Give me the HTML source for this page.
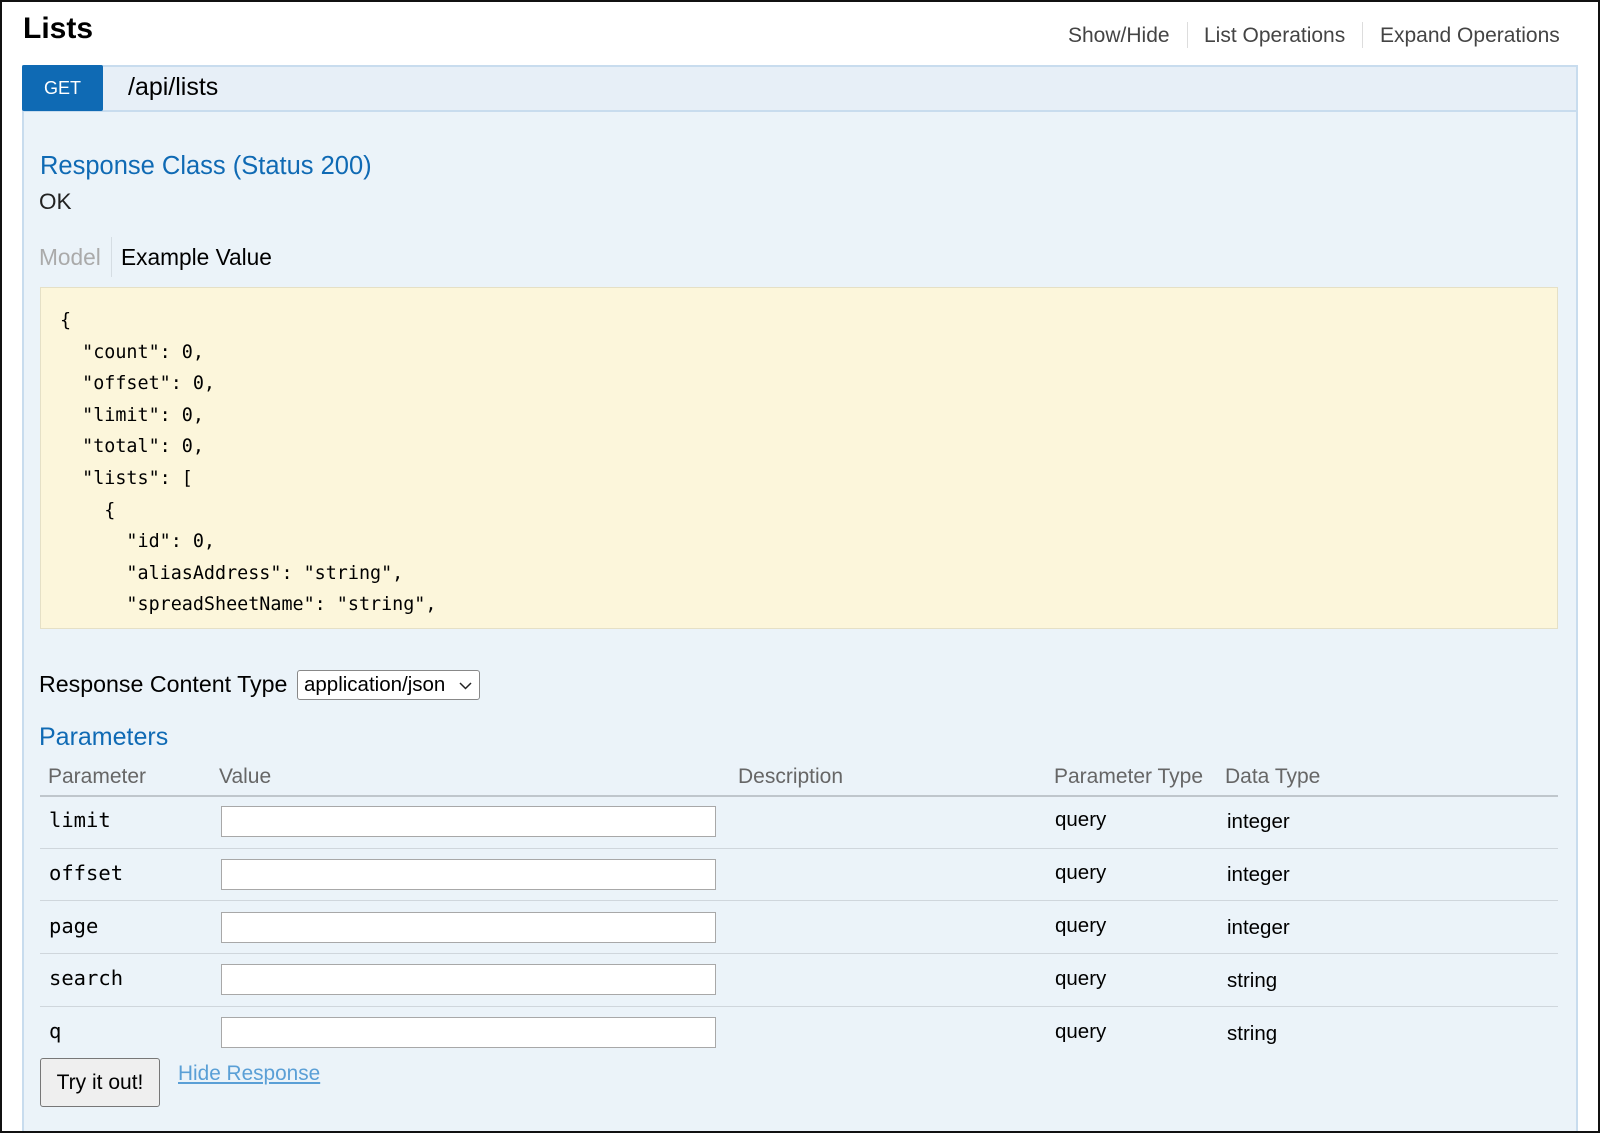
<!DOCTYPE html>
<html><head><meta charset="utf-8"><style>
*{margin:0;padding:0;box-sizing:border-box}
body{width:1600px;height:1133px;background:#fff;position:relative;overflow:hidden;font-family:"Liberation Sans",Arial,sans-serif;color:#000}
.frame{position:absolute;left:0;top:0;width:1600px;height:1133px;border:2px solid #111;z-index:5;pointer-events:none}
.a{position:absolute;white-space:nowrap}
.t{position:absolute;white-space:nowrap;line-height:1}
.mono{font-family:"DejaVu Sans Mono","Liberation Mono",monospace}
.panel{position:absolute;left:22px;top:65px;width:1556px;height:1066px;background:#ebf3f9;border:2px solid #c8dcee;border-bottom:none}
.hdr{position:absolute;left:22px;top:65px;width:1556px;height:47px;background:#e7eff7;border:2px solid #c8dcee}
.get{position:absolute;left:22px;top:65px;width:81px;height:46px;background:#0f6ab4;color:#fff;font-size:18px;text-align:center;line-height:46px;border-radius:2px}
.code{position:absolute;left:40px;top:287px;width:1518px;height:342px;background:#fcf6db;border:1px solid #e5e0c6;overflow:hidden}
.code pre{position:absolute;left:19px;top:17px;font-family:"DejaVu Sans Mono","Liberation Mono",monospace;font-size:18.4px;line-height:31.6px;color:#000}
.line{position:absolute;left:40px;width:1518px;height:1px;background:#cfd6dc}
.inp{position:absolute;left:221px;width:495px;height:31px;background:#fff;border:1px solid #a8a8a8}
.h{color:#666;font-size:21px}
.r{font-size:20.5px}
.pm{font-size:20.5px}
</style></head><body>
<div class="frame"></div>
<div class="t" style="left:23px;top:14px;font-size:30px;font-weight:bold">Lists</div>
<div class="t" style="left:1068px;top:25px;font-size:21px;color:#444">Show/Hide</div>
<div class="a" style="left:1187px;top:22px;width:1px;height:26px;background:#ddd"></div>
<div class="t" style="left:1204px;top:25px;font-size:21px;color:#444">List Operations</div>
<div class="a" style="left:1362px;top:22px;width:1px;height:26px;background:#ddd"></div>
<div class="t" style="left:1380px;top:25px;font-size:21px;color:#444">Expand Operations</div>

<div class="panel"></div>
<div class="hdr"></div>
<div class="get">GET</div>
<div class="t" style="left:128px;top:75px;font-size:25px">/api/lists</div>

<div class="t" style="left:40px;top:154px;font-size:25.5px;color:#0f6ab4">Response Class (Status 200)</div>
<div class="t" style="left:39px;top:191px;font-size:22.5px;color:#222">OK</div>
<div class="t" style="left:39px;top:246px;font-size:22.7px;color:#aaa">Model</div>
<div class="a" style="left:111px;top:237px;width:1px;height:40px;background:#d5dde3"></div>
<div class="t" style="left:121px;top:246px;font-size:22.7px">Example Value</div>

<div class="code"><pre>{
  "count": 0,
  "offset": 0,
  "limit": 0,
  "total": 0,
  "lists": [
    {
      "id": 0,
      "aliasAddress": "string",
      "spreadSheetName": "string",</pre></div>

<div class="t" style="left:39px;top:673px;font-size:23.2px">Response Content Type</div>
<div class="a" style="left:297px;top:670px;width:183px;height:30px;background:#fff;border:1px solid #888;border-radius:3px;font-size:20.5px;line-height:28px;padding-left:6px">application/json
<svg style="position:absolute;right:7px;top:11px" width="13" height="8" viewBox="0 0 13 8"><path d="M1 1 L6.5 6.5 L12 1" fill="none" stroke="#222" stroke-width="1.5"/></svg></div>

<div class="t" style="left:39px;top:725px;font-size:25px;color:#0f6ab4">Parameters</div>
<div class="t h" style="left:48px;top:766px">Parameter</div>
<div class="t h" style="left:219px;top:766px">Value</div>
<div class="t h" style="left:738px;top:766px">Description</div>
<div class="t h" style="left:1054px;top:766px">Parameter Type</div>
<div class="t h" style="left:1225px;top:766px">Data Type</div>
<div class="line" style="top:795px;height:2px;background:#bfc6cc"></div>
<div class="line" style="top:848px"></div>
<div class="line" style="top:900px"></div>
<div class="line" style="top:953px"></div>
<div class="line" style="top:1006px"></div>

<div class="t mono pm" style="left:49px;top:810px">limit</div>
<div class="inp" style="top:806px"></div>
<div class="t r" style="left:1055px;top:810px">query</div>
<div class="t r" style="left:1227px;top:812px">integer</div>

<div class="t mono pm" style="left:49px;top:863px">offset</div>
<div class="inp" style="top:859px"></div>
<div class="t r" style="left:1055px;top:863px">query</div>
<div class="t r" style="left:1227px;top:865px">integer</div>

<div class="t mono pm" style="left:49px;top:916px">page</div>
<div class="inp" style="top:912px"></div>
<div class="t r" style="left:1055px;top:916px">query</div>
<div class="t r" style="left:1227px;top:918px">integer</div>

<div class="t mono pm" style="left:49px;top:968px">search</div>
<div class="inp" style="top:964px"></div>
<div class="t r" style="left:1055px;top:969px">query</div>
<div class="t r" style="left:1227px;top:971px">string</div>

<div class="t mono pm" style="left:49px;top:1021px">q</div>
<div class="inp" style="top:1017px"></div>
<div class="t r" style="left:1055px;top:1022px">query</div>
<div class="t r" style="left:1227px;top:1024px">string</div>

<div class="a" style="left:40px;top:1058px;width:120px;height:49px;background:#efefef;border:1px solid #777;border-radius:3px;font-size:21px;text-align:center;line-height:47px">Try it out!</div>
<div class="t" style="left:178px;top:1064px;font-size:20.8px;color:#5a9fd6;text-decoration:underline">Hide Response</div>
</body></html>
